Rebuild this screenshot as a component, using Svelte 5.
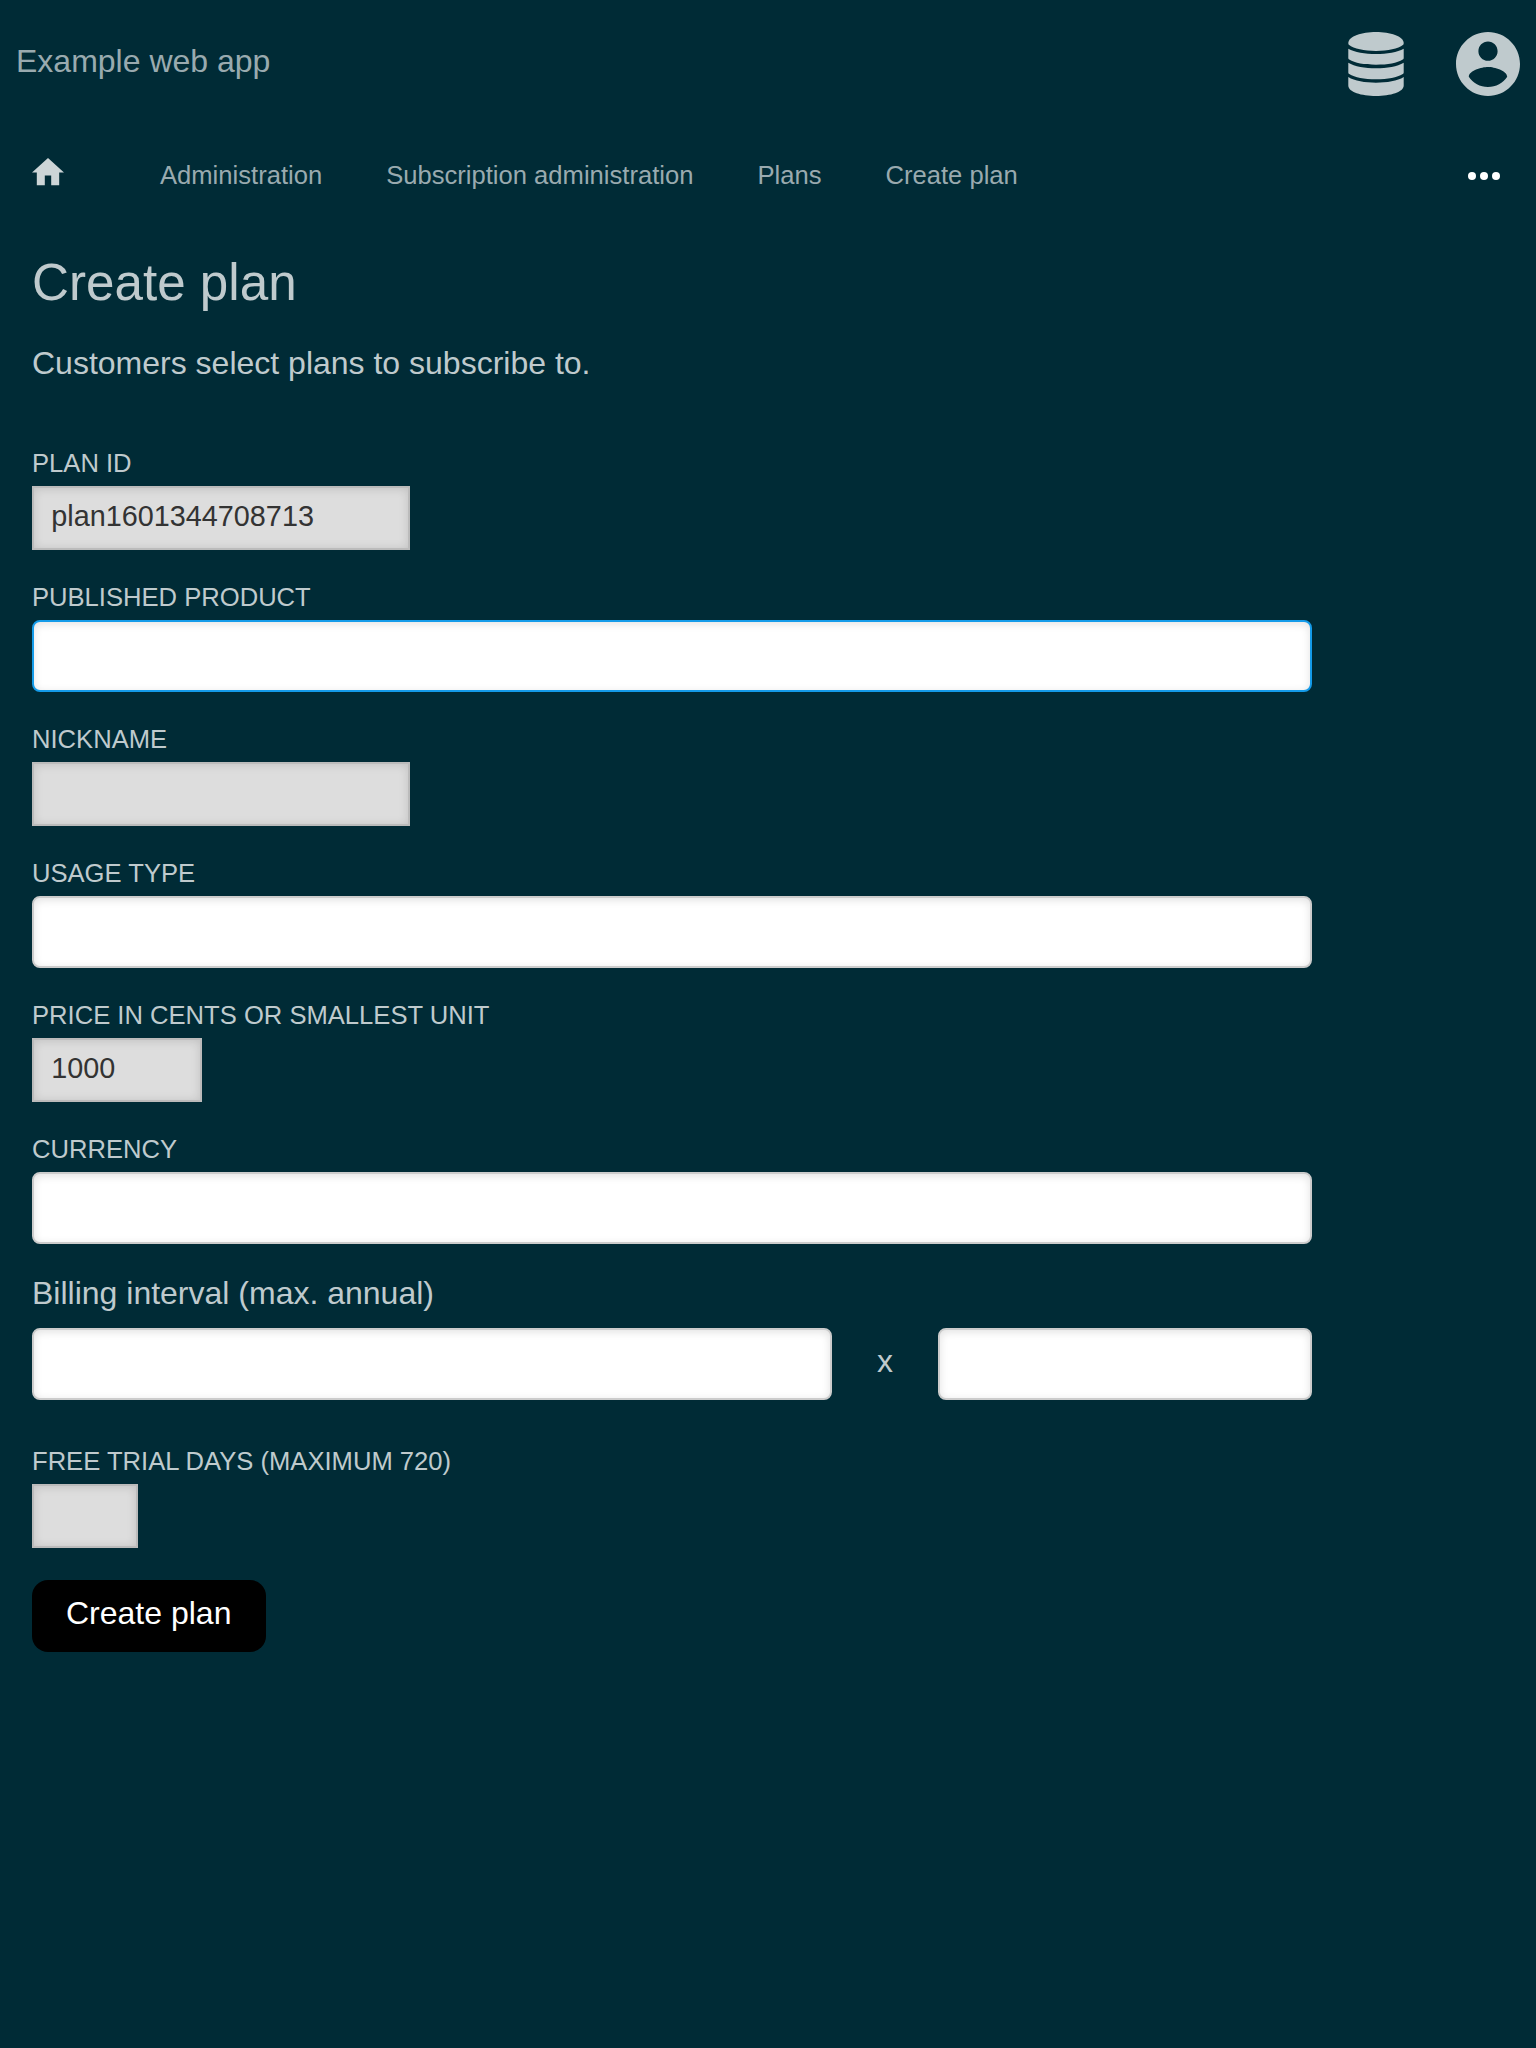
<script lang="ts">
  const crumbs = ['Administration', 'Subscription administration', 'Plans', 'Create plan'];
</script>

<div class="page">
  <header>
    <span class="brand">Example web app</span>
    <div class="tools">
      <svg class="db" viewBox="0 0 56 64" aria-label="Data">
        <path d="M28 0C42 0 55.700 4 55.700 11.200Q55.700 12 55.200 12.800C50 16.900 40 18.900 28 18.900S6 16.900 0.800 12.800Q0.300 12 0.300 11.200C0.300 4 14 0 28 0Z" />
        <path d="M0.300 16.700C6.500 20.200 17 22 28 22S49.500 20.200 55.700 16.700V26Q55.700 27 54.800 27.600C49 31.200 40 32.800 28 32.800S7 31.200 1.200 27.600Q0.300 27 0.300 26Z" />
        <path d="M0.300 30.700C6.500 34.500 17 36.300 28 36.300S49.500 34.500 55.700 30.700V40.400Q55.700 41.400 54.800 42C49 45.600 40 47.300 28 47.300S7 45.600 1.200 42Q0.300 41.400 0.300 40.400Z" />
        <path d="M0.300 45C6.500 49 17 50.700 28 50.700S49.500 49 55.700 45V53.500C55.700 60 42.500 64 28 64S0.300 60 0.300 53.500Z" />
      </svg>
      <svg class="user" viewBox="2 2 20 20" aria-label="Account">
        <path d="M12 2C6.480 2 2 6.480 2 12s4.480 10 10 10 10-4.480 10-10S17.520 2 12 2zm0 3c1.660 0 3 1.340 3 3s-1.340 3-3 3-3-1.340-3-3 1.340-3 3-3zm0 14.200c-2.500 0-4.710-1.280-6-3.220.030-1.990 4-3.080 6-3.080 1.990 0 5.970 1.090 6 3.080-1.290 1.940-3.500 3.220-6 3.220z" />
      </svg>
    </div>
  </header>

  <nav>
    <svg class="home" viewBox="2 3 20 17" aria-label="Home">
      <path d="M10 20v-6h4v6h5v-8h3L12 3 2 12h3v8z" />
    </svg>
    <div class="crumbs">
      {#each crumbs as crumb}<span>{crumb}</span>{/each}
    </div>
    <svg class="more" viewBox="0 0 32 8" aria-label="More">
      <circle cx="4" cy="4" r="4" /><circle cx="16" cy="4" r="4" /><circle cx="28" cy="4" r="4" />
    </svg>
  </nav>

  <main>
    <h1>Create plan</h1>
    <p class="intro">Customers select plans to subscribe to.</p>

    <form>
      <div class="field">
        <label for="plan">PLAN ID</label>
        <input id="plan" class="wide" type="text" value="plan1601344708713" />
      </div>
      <div class="field">
        <label for="product">PUBLISHED PRODUCT</label>
        <div id="product" class="select active"></div>
      </div>
      <div class="field">
        <label for="nickname">NICKNAME</label>
        <input id="nickname" class="wide" type="text" />
      </div>
      <div class="field">
        <label for="usage">USAGE TYPE</label>
        <div id="usage" class="select"></div>
      </div>
      <div class="field">
        <label for="price">PRICE IN CENTS OR SMALLEST UNIT</label>
        <input id="price" class="medium" type="text" value="1000" />
      </div>
      <div class="field">
        <label for="currency">CURRENCY</label>
        <div id="currency" class="select"></div>
      </div>
      <div class="billing">
        <p>Billing interval (max. annual)</p>
        <div class="interval">
          <div class="select"></div>
          <span>x</span>
          <div class="select"></div>
        </div>
      </div>
      <div class="field">
        <label for="trial">FREE TRIAL DAYS (MAXIMUM 720)</label>
        <input id="trial" class="narrow" type="text" />
      </div>
      <button type="button">Create plan</button>
    </form>
  </main>
</div>

<style>
  :global(body) {
    background: #002b36;
  }
  .page {
    box-sizing: border-box;
    min-height: 2048px;
    background: #002b36;
    color: #bfcacd;
    font-family: 'Liberation Sans', Arial, sans-serif;
    font-size: 32px;
  }
  svg {
    display: block;
    fill: #bfcacd;
  }
  header {
    display: flex;
    justify-content: space-between;
    height: 128px;
    box-sizing: border-box;
    padding: 32px 16px;
  }
  .brand {
    line-height: 58px;
    color: #99aaaf;
  }
  .tools {
    display: flex;
    gap: 52px;
  }
  .db {
    width: 56px;
    height: 64px;
  }
  .user {
    width: 64px;
    height: 64px;
  }
  nav {
    display: flex;
    height: 96px;
    padding: 0 36px 0 32px;
    font-size: 25.6px;
    line-height: 94px;
    color: #99aaaf;
  }
  .home {
    width: 32px;
    height: 27.2px;
    margin: 30.400px 96px 0 0;
    fill: #ccd5d7;
  }
  .crumbs {
    display: flex;
    flex: 1;
    gap: 64px;
  }
  .more {
    width: 32px;
    height: 8px;
    margin-top: 44px;
    fill: #fff;
  }
  main {
    padding: 0 224px 0 32px;
  }
  h1 {
    margin: 0;
    padding-top: 27px;
    font-size: 51.2px;
    font-weight: 400;
    line-height: 64px;
  }
  .intro {
    margin: 26px 0 63px;
    line-height: 44px;
  }
  .field {
    margin-bottom: 32px;
  }
  label {
    display: block;
    height: 38px;
    font-size: 25.6px;
    line-height: 30px;
  }
  input {
    display: block;
    box-sizing: border-box;
    height: 64px;
    margin: 0;
    padding: 0 17.280px 4px;
    border: 2px solid #bbb;
    border-radius: 0;
    background: #ddd;
    box-shadow: inset 0 1px 10px rgba(0, 0, 0, 0.13);
    color: #333;
    font: 28.8px 'Liberation Sans', Arial, sans-serif;
    outline: 0;
  }
  .wide {
    width: 378px;
  }
  .medium {
    width: 170px;
  }
  .narrow {
    width: 106px;
  }
  .select {
    box-sizing: border-box;
    height: 72px;
    border: 2px solid #ccc;
    border-radius: 8px;
    background: #fff;
    box-shadow: inset 0 2px 8px rgba(0, 0, 0, 0.12);
  }
  .select.active {
    border-color: #149be9;
  }
  .billing {
    margin-bottom: 46px;
  }
  .billing p {
    margin: 0;
    height: 52px;
    line-height: 34px;
  }
  .interval {
    display: grid;
    grid-template-columns: 800px 106px 374px;
    text-align: center;
    line-height: 66px;
  }
  button {
    display: block;
    height: 72px;
    margin: 0;
    padding: 0 34.600px 6px 34px;
    border: 0;
    border-radius: 16px;
    background: #000;
    color: #fff;
    font: 32px/66px 'Liberation Sans', Arial, sans-serif;
  }
</style>
